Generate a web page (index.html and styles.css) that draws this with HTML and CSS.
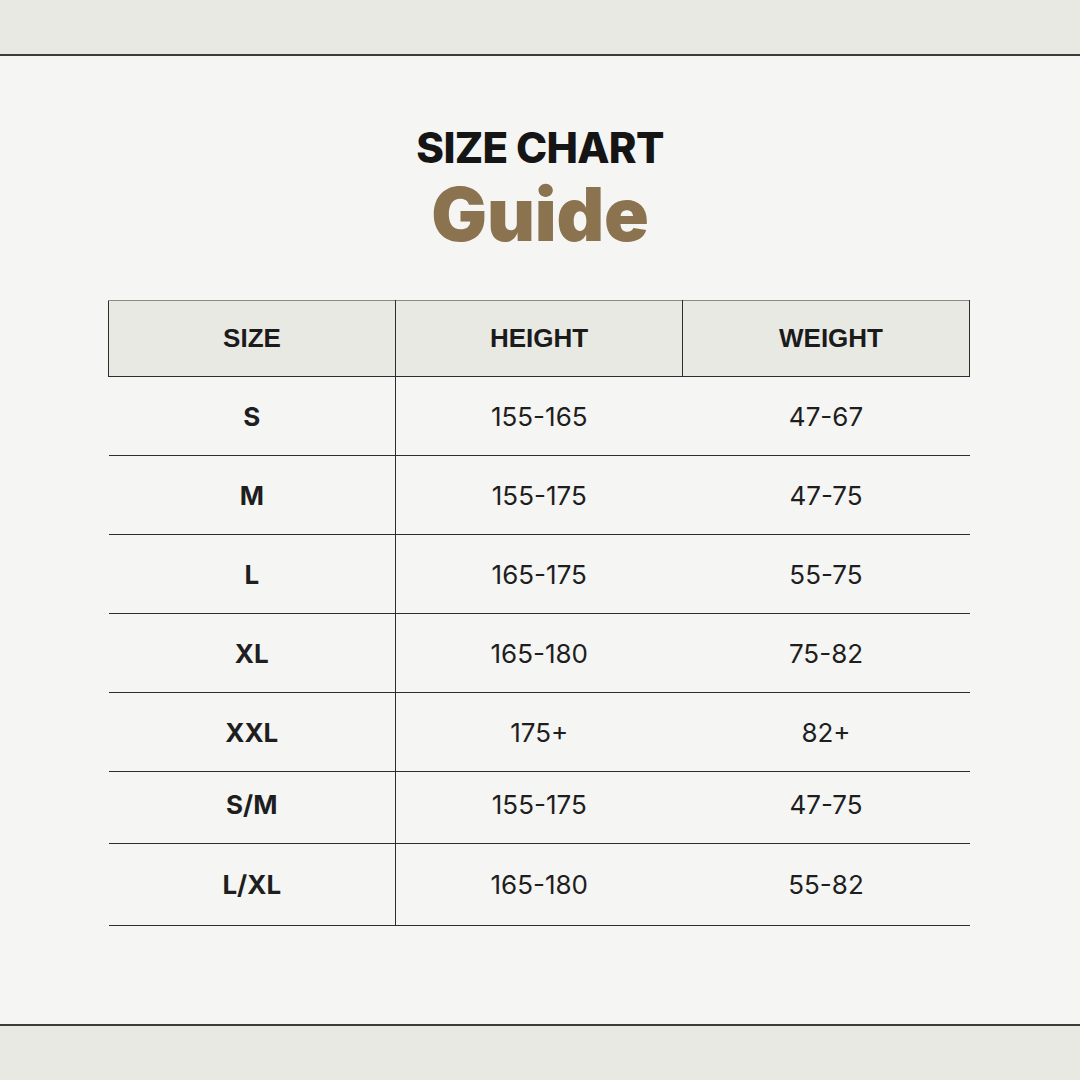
FILE: index.html
```html
<!DOCTYPE html>
<html lang="en">
<head>
<meta charset="utf-8">
<title>Size Chart Guide</title>
<link rel="stylesheet" href="styles.css">
</head>
<body>
<div class="band band-top"></div>
<main class="main">
  <header class="titles">
    <h1 class="title">SIZE CHART</h1>
    <h2 class="subtitle">Guide</h2>
  </header>
  <table class="chart">
    <thead>
      <tr>
        <th>SIZE</th>
        <th>HEIGHT</th>
        <th class="weight">WEIGHT</th>
      </tr>
    </thead>
    <tbody>
      <tr><td class="size">S</td><td>155-165</td><td>47-67</td></tr>
      <tr><td class="size">M</td><td>155-175</td><td>47-75</td></tr>
      <tr><td class="size">L</td><td>165-175</td><td>55-75</td></tr>
      <tr><td class="size">XL</td><td>165-180</td><td>75-82</td></tr>
      <tr><td class="size">XXL</td><td>175+</td><td>82+</td></tr>
      <tr class="short"><td class="size">S/M</td><td>155-175</td><td>47-75</td></tr>
      <tr class="tall"><td class="size">L/XL</td><td>165-180</td><td>55-82</td></tr>
    </tbody>
  </table>
</main>
<div class="band band-bottom"></div>
</body>
</html>
```

FILE: styles.css
```css
* { box-sizing: border-box; }
html, body { margin: 0; padding: 0; }
body {
  width: 1080px;
  height: 1080px;
  background: #f5f5f3;
  display: flex;
  flex-direction: column;
  font-family: "Inter", "Liberation Sans", sans-serif;
  color: #1b1b1b;
  overflow: hidden;
}
.band {
  background: #e9e9e3;
  height: 56px;
  flex: none;
}
.band-top { border-bottom: 2px solid #3b3d38; }
.band-bottom { border-top: 2px solid #3b3d38; }
.main {
  flex: 1;
  display: flex;
  flex-direction: column;
  align-items: center;
  padding-top: 66px;
}
.titles {
  display: flex;
  flex-direction: column;
  align-items: center;
}
.title {
  margin: 0;
  font-family: "Inter", sans-serif;
  font-weight: 800;
  font-size: 42px;
  line-height: 52px;
  letter-spacing: -0.7px;
  color: #151515;
}
.subtitle {
  margin: 0;
  font-family: "Inter", sans-serif;
  font-weight: 900;
  font-size: 74px;
  line-height: 80px;
  letter-spacing: -0.2px;
  color: #8b7350;
}
.chart {
  margin-top: 46px;
  margin-right: 2px;
  width: 862px;
  border-collapse: collapse;
  table-layout: fixed;
}
.chart th {
  height: 76px;
  background: #e9e9e4;
  border: 1px solid #2d2d2d;
  border-top-color: #8a8a86;
  font-family: "Liberation Sans", Arial, sans-serif;
  font-weight: 700;
  font-size: 26px;
  color: #1b1b1b;
  text-align: center;
  padding: 0;
}
.chart th.weight { padding-left: 10px; }
.chart td {
  height: 79px;
  border-bottom: 1px solid #2d2d2d;
  text-align: center;
  font-size: 26px;
  font-weight: 400;
  color: #1e1e1e;
  padding: 0;
}
.chart td.size {
  border-right: 1px solid #2d2d2d;
  font-weight: 700;
}
.chart tr.short td { height: 72px; padding-bottom: 6px; }
.chart tr.tall td { height: 82px; }
```
